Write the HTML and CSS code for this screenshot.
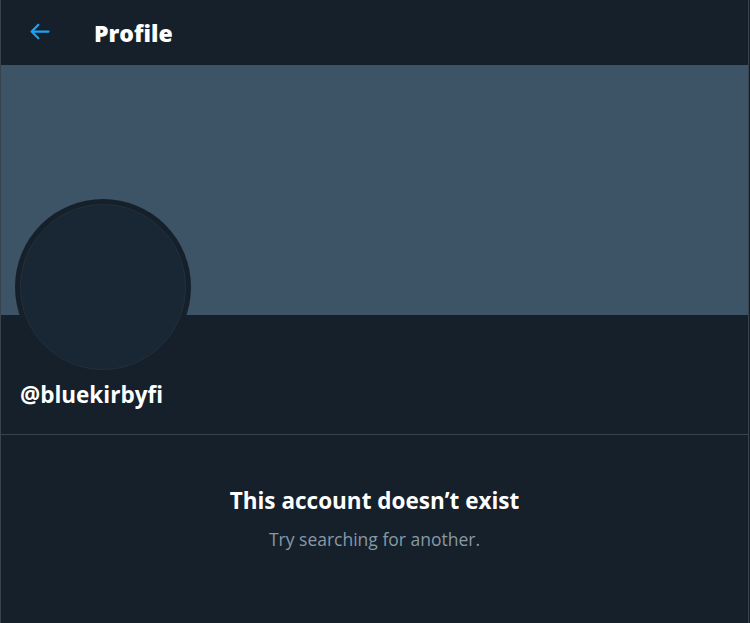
FILE: index.html
```html
<!DOCTYPE html>
<html lang="en">
<head>
  <meta charset="UTF-8" />
  <meta name="viewport" content="width=device-width, initial-scale=1.0"/>
  <title>Profile</title>
  <link rel="stylesheet" href="styles.css">
</head>
<body>
  <div class="column">
    <header class="topbar">
      <a class="back" href="#" aria-label="Back">
        <svg viewBox="0 0 24 24" width="27" height="27">
          <path d="M20 11H7.414l4.293-4.293c.39-.39.39-1.023 0-1.414s-1.023-.39-1.414 0l-6 6c-.39.39-.39 1.023 0 1.414l6 6c.195.195.45.293.707.293s.512-.098.707-.293c.39-.39.39-1.023 0-1.414L7.414 13H20c.553 0 1-.447 1-1s-.447-1-1-1z"/>
        </svg>
      </a>
      <h1>Profile</h1>
    </header>

    <div class="banner"></div>

    <div class="profile">
      <div class="avatar"><div class="avatar-inner"></div></div>
      <div class="handle">@bluekirbyfi</div>
    </div>

    <div class="empty">
      <h2>This account doesn’t exist</h2>
      <p>Try searching for another.</p>
    </div>
  </div>
</body>
</html>
```

FILE: styles.css
```css
* {
  margin: 0;
  padding: 0;
  box-sizing: border-box;
}

body {
  background-color: #15202b;
  color: white;
  font-family: "Open Sans", "Noto Sans", Arial, sans-serif;
  overflow: hidden;
}

.column {
  width: 749px;
  min-height: 623px;
  border-left: 1px solid #38444d;
  border-right: 1px solid #38444d;
}

.topbar {
  height: 65px;
  display: flex;
  align-items: center;
  padding-left: 25px;
}

.back {
  display: flex;
  width: 27px;
  height: 27px;
  margin-right: 41px;
  margin-top: -3px;
}

.back svg {
  fill: #1da1f2;
}

h1 {
  font-size: 23px;
  font-weight: 800;
}

.banner {
  height: 250px;
  background-color: #3d5466;
}

.profile {
  display: flow-root;
  padding: 0 14px;
  border-bottom: 1px solid #38444d;
  height: 120px;
}

.avatar {
  width: 176px;
  height: 176px;
  margin-top: -116px;
  border-radius: 50%;
  background-color: #15202b;
  padding: 5px;
}

.avatar-inner {
  width: 100%;
  height: 100%;
  border-radius: 50%;
  background-color: #192734;
  border: 1px solid #22303c;
}

.handle {
  margin-top: 4px;
  padding-left: 5px;
  font-size: 22.5px;
  font-weight: 700;
}

.empty {
  text-align: center;
  padding-top: 50px;
}

h2 {
  font-size: 22.5px;
  font-weight: 700;
}

.empty p {
  margin-top: 11px;
  font-size: 17.5px;
  color: #8899a6;
}
```
